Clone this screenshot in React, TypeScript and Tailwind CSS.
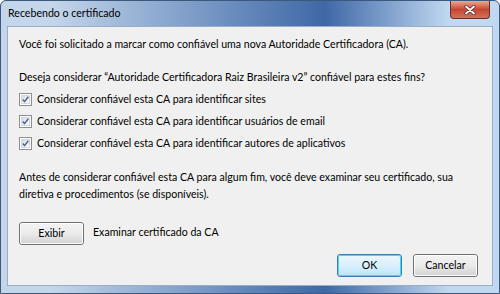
import React from 'react';

const font = { fontFamily: 'Lato, "Noto Sans", sans-serif' };

function Check() {
  return (
    <span className="relative inline-flex h-[13px] w-[13px] shrink-0 items-center justify-center border border-[#8e8f8f] bg-white">
      <span className="absolute inset-[1px] border border-[#d6d9dc] bg-gradient-to-br from-[#d8dde3] to-[#fbfbfb]" />
      <svg viewBox="0 0 13 13" className="relative h-[13px] w-[13px]">
        <path d="M3.2 6.4 L5.4 9 L9.8 3.3" fill="none" stroke="#4a5f97" strokeWidth="1.7" strokeLinejoin="round" />
      </svg>
    </span>
  );
}

function Btn({ label, primary, className = '' }: { label: string; primary?: boolean; className?: string }) {
  return (
    <button
      className={`relative flex h-[23px] w-[65px] shrink-0 items-center justify-center rounded-[3px] border text-[10.6px] text-black ${
        primary ? 'border-[#3c7fb1]' : 'border-[#707070]'
      } ${className}`}
    >
      <span
        className={`absolute inset-0 rounded-[2px] border ${
          primary ? 'border-[#48d4f8] bg-gradient-to-b from-[#eaf6fd] via-[#d9f0fc] to-[#bee6fd]' : 'border-[#fcfcfc] bg-gradient-to-b from-[#f2f2f2] via-[#ebebeb] to-[#d4d4d4]'
        }`}
      />
      <span className="relative leading-none">{label}</span>
    </button>
  );
}

export default function App() {
  const items = [
    'Considerar confiável esta CA para identificar sites',
    'Considerar confiável esta CA para identificar usuários de email',
    'Considerar confiável esta CA para identificar autores de aplicativos',
  ];
  return (
    <div style={font} className="h-[294px] w-[500px] overflow-hidden whitespace-nowrap bg-white">
      <div className="flex h-[294px] w-[500px] flex-col rounded-t-[6px] border border-[#3c587c] bg-gradient-to-r from-[#c4d6ea] from-10% via-[#3f68a6] via-65% to-[#c2d8f0] to-90%">
        {/* Barra de título */}
        <div className="relative flex h-[25px] shrink-0 items-center pl-[7px]">
          <span className="text-[10.6px] text-black">Recebendo o certificado</span>
          <div className="absolute right-[9px] top-0 flex h-[18px] w-[40px] items-center justify-center rounded-b-[4px] border border-t-0 border-[#6a2d2a] bg-gradient-to-b from-[#e6a896] via-[#c7452f] to-[#d0735c]">
            <svg viewBox="0 0 12 10" className="h-[10px] w-[12px]">
              <path d="M2 1.5 L10 8.5 M10 1.5 L2 8.5" stroke="#4a2a28" strokeWidth="3.2" strokeLinecap="round" />
              <path d="M2 1.5 L10 8.5 M10 1.5 L2 8.5" stroke="#ffffff" strokeWidth="1.8" strokeLinecap="round" />
            </svg>
          </div>
        </div>

        {/* Conteúdo */}
        <div className="mx-[6px] mb-[7px] flex flex-1 flex-col border border-[#9aaec8] bg-[#f0f0f0] text-[10.6px] text-black">
          <div className="flex flex-1 flex-col px-[11px]">
            <p className="mt-[9px] leading-[16px]">
              Você foi solicitado a marcar como confiável uma nova Autoridade Certificadora (CA).
            </p>
            <p className="mt-[17px] leading-[16px]">
              Deseja considerar “Autoridade Certificadora Raiz Brasileira v2” confiável para estes fins?
            </p>
            <div className="mt-[6px] flex flex-col gap-[6px]">
              {items.map((t) => (
                <label key={t} className="flex h-[16px] items-center gap-[5px]">
                  <Check />
                  <span className="leading-[16px]">{t}</span>
                </label>
              ))}
            </div>
            <p className="mt-[18px] leading-[17px]">
              Antes de considerar confiável esta CA para algum fim, você deve examinar seu certificado, sua
              <br />
              diretiva e procedimentos (se disponíveis).
            </p>
            <div className="mt-[19px] flex items-center gap-[9px]">
              <Btn label="Exibir" />
              <span className="-mt-[2px]">Examinar certificado da CA</span>
            </div>
            <div className="mt-[9px] flex justify-end gap-[11px] pr-[3px]">
              <Btn label="OK" primary />
              <Btn label="Cancelar" />
            </div>
          </div>
        </div>
      </div>
    </div>
  );
}
